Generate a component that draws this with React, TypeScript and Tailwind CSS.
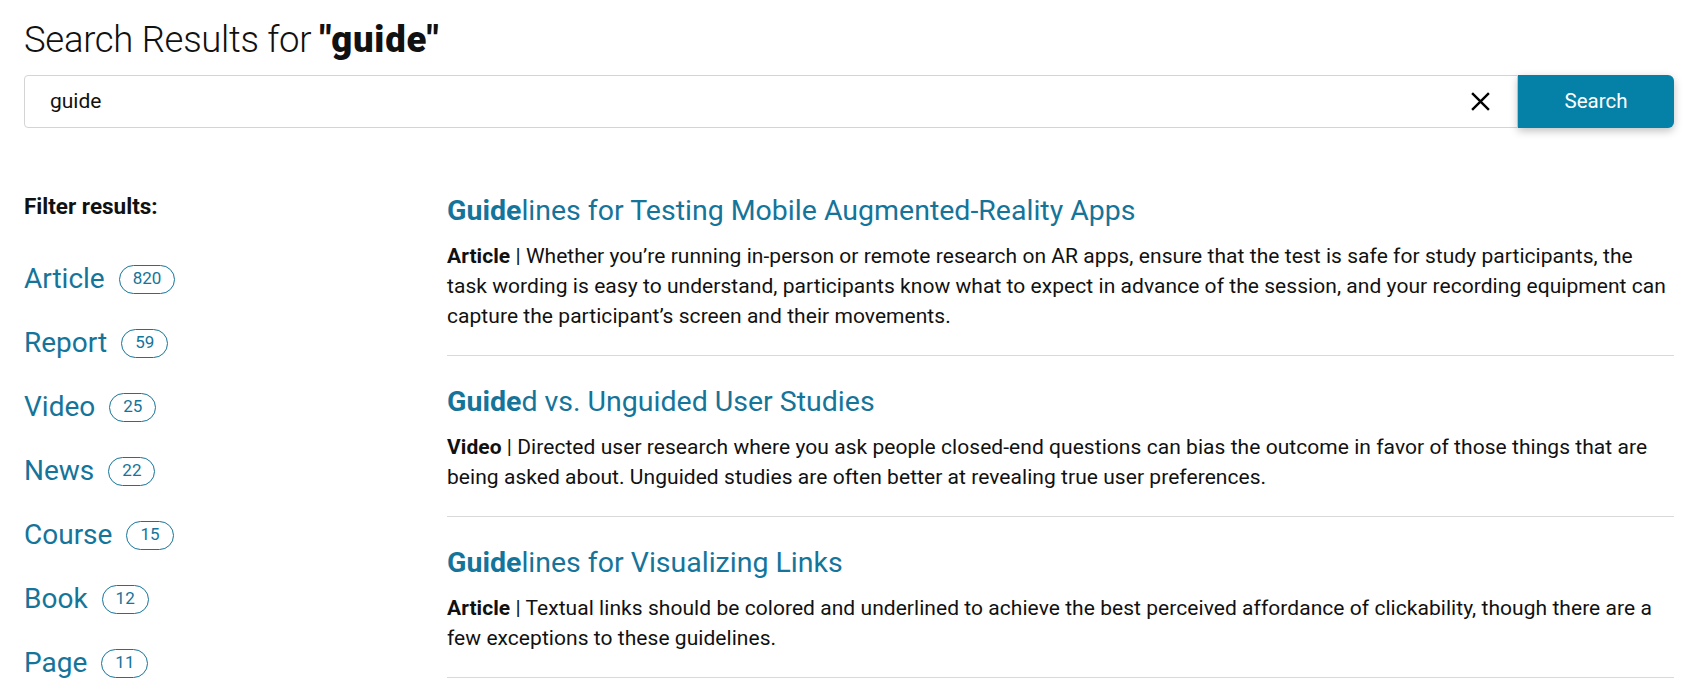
import React from "react";

const filters = [
  { label: "Article", count: 820 },
  { label: "Report", count: 59 },
  { label: "Video", count: 25 },
  { label: "News", count: 22 },
  { label: "Course", count: 15 },
  { label: "Book", count: 12 },
  { label: "Page", count: 11 },
];

const results = [
  {
    match: "Guide",
    rest: "lines for Testing Mobile Augmented-Reality Apps",
    type: "Article",
    text: "Whether you’re running in-person or remote research on AR apps, ensure that the test is safe for study participants, the task wording is easy to understand, participants know what to expect in advance of the session, and your recording equipment can capture the participant’s screen and their movements.",
  },
  {
    match: "Guide",
    rest: "d vs. Unguided User Studies",
    type: "Video",
    text: "Directed user research where you ask people closed-end questions can bias the outcome in favor of those things that are being asked about. Unguided studies are often better at revealing true user preferences.",
  },
  {
    match: "Guide",
    rest: "lines for Visualizing Links",
    type: "Article",
    text: "Textual links should be colored and underlined to achieve the best perceived affordance of clickability, though there are a few exceptions to these guidelines.",
  },
];

export default function App() {
  return (
    <div className="min-h-screen bg-white font-['Roboto',sans-serif] text-[#111]">
      <div className="pl-6 pr-[27px] pt-4">
        <h1 className="text-[36.5px] leading-[48px] font-normal">
          <span className="font-light tracking-[-0.3px]">Search Results for </span>
          <span className="font-black tracking-[0.8px]">"guide"</span>
        </h1>

        {/* search bar */}
        <div className="mt-[11px] flex h-[53px]">
          <div className="flex flex-1 items-center rounded-l-[4px] border border-[#d4d4d4] pl-[25px] pr-[26px]">
            <span className="flex-1 text-[21px]">guide</span>
            <svg width="21" height="21" viewBox="0 0 20 20" className="text-black">
              <path d="M2 2 L18 18 M18 2 L2 18" stroke="currentColor" strokeWidth="2.3" fill="none" />
            </svg>
          </div>
          <button className="w-[156px] rounded-r-[6px] bg-[#0580a6] text-[20.5px] text-white shadow-[0_3px_8px_rgba(0,0,0,0.25)]">
            Search
          </button>
        </div>

        <div className="mt-[37px] flex">
          <aside className="w-[423px] shrink-0 pt-[26px]">
            <div className="text-[22.5px] font-bold leading-[30px]">Filter results:</div>
            <ul className="mt-[26px]">
              {filters.map((f) => (
                <li key={f.label} className="flex h-16 items-center gap-[14px]">
                  <span className="text-[28px] text-[#15749a]">{f.label}</span>
                  <span className="flex h-[29px] items-center rounded-full border border-[#15749a] px-[13px] text-[17px] text-[#15749a]">
                    {f.count}
                  </span>
                </li>
              ))}
            </ul>
          </aside>

          <section className="flex-1">
            {results.map((r, i) => (
              <div key={i} className="border-b border-[#d9d9d9] pt-[26px] pb-[24px]">
                <h2 className="text-[28.5px] leading-10 text-[#15749a]">
                  <span className="font-bold">{r.match}</span>
                  {r.rest}
                </h2>
                <p className="mt-[10px] text-[21px] leading-[30px] tracking-[0.05px]">
                  <span className="font-bold">{r.type}</span> | {r.text}
                </p>
              </div>
            ))}
          </section>
        </div>
      </div>
    </div>
  );
}
